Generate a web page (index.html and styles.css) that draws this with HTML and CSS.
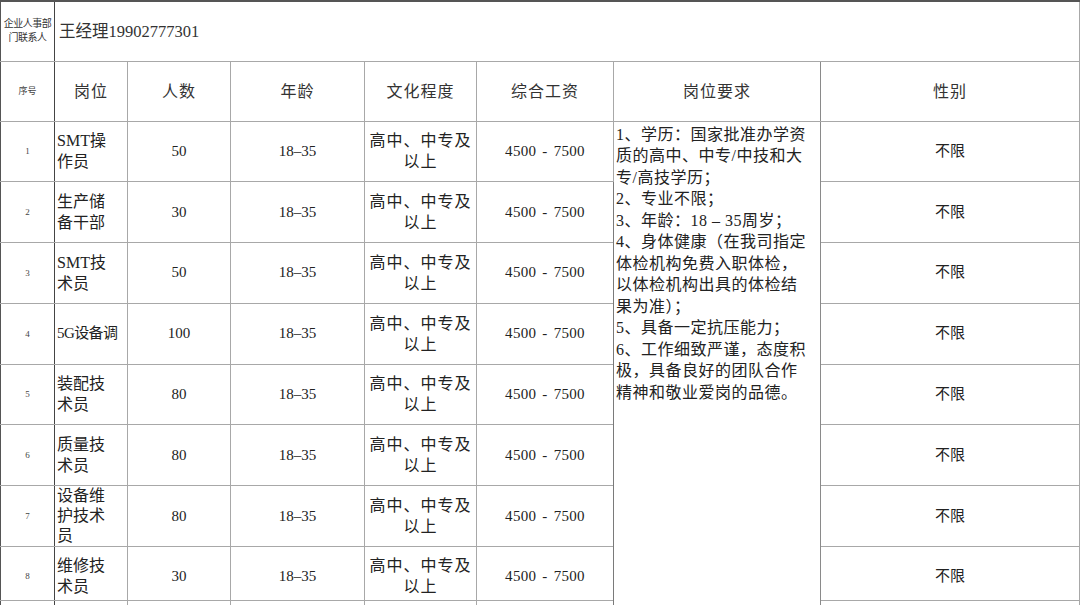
FILE: index.html
```html
<!DOCTYPE html>
<html lang="zh-CN">
<head>
<meta charset="utf-8">
<title>招聘岗位表</title>
<link rel="stylesheet" href="styles.css">
</head>
<body>
<table class="sheet">
  <colgroup>
    <col class="c-no"><col class="c-pos"><col class="c-num"><col class="c-age"><col class="c-edu"><col class="c-pay"><col class="c-req"><col class="c-sex">
  </colgroup>
  <tbody>
    <tr class="r-contact">
      <td class="tiny2 bold-right">企业人事部<br>门联系人</td>
      <td class="contact" colspan="7">王经理19902777301</td>
    </tr>
    <tr class="r-head">
      <td class="tiny bold-right">序号</td>
      <td class="head">岗位</td>
      <td class="head">人数</td>
      <td class="head">年龄</td>
      <td class="head">文化程度</td>
      <td class="head">综合工资</td>
      <td class="head req-border">岗位要求</td>
      <td class="head">性别</td>
    </tr>
    <tr class="r-data">
      <td class="tiny bold-right">1</td>
      <td class="pos">SMT操<br>作员</td>
      <td class="num">50</td>
      <td class="num">18–35</td>
      <td class="edu">高中、中专及<br>以上</td>
      <td class="num pay">4500 - 7500</td>
      <td class="req req-border" rowspan="9">1、学历：国家批准办学资<br>质的高中、中专/中技和大<br>专/高技学历；<br>2、专业不限；<br>3、年龄：18 – 35周岁；<br>4、身体健康（在我司指定<br>体检机构免费入职体检，<br>以体检机构出具的体检结<br>果为准）；<br>5、具备一定抗压能力；<br>6、工作细致严谨，态度积<br>极，具备良好的团队合作<br>精神和敬业爱岗的品德。</td>
      <td class="sex">不限</td>
    </tr>
    <tr class="r-data">
      <td class="tiny bold-right">2</td>
      <td class="pos">生产储<br>备干部</td>
      <td class="num">30</td>
      <td class="num">18–35</td>
      <td class="edu">高中、中专及<br>以上</td>
      <td class="num pay">4500 - 7500</td>
      <td class="sex">不限</td>
    </tr>
    <tr class="r-data">
      <td class="tiny bold-right">3</td>
      <td class="pos">SMT技<br>术员</td>
      <td class="num">50</td>
      <td class="num">18–35</td>
      <td class="edu">高中、中专及<br>以上</td>
      <td class="num pay">4500 - 7500</td>
      <td class="sex">不限</td>
    </tr>
    <tr class="r-data">
      <td class="tiny bold-right">4</td>
      <td class="pos tight">5G设备调</td>
      <td class="num">100</td>
      <td class="num">18–35</td>
      <td class="edu">高中、中专及<br>以上</td>
      <td class="num pay">4500 - 7500</td>
      <td class="sex">不限</td>
    </tr>
    <tr class="r-data">
      <td class="tiny bold-right">5</td>
      <td class="pos">装配技<br>术员</td>
      <td class="num">80</td>
      <td class="num">18–35</td>
      <td class="edu">高中、中专及<br>以上</td>
      <td class="num pay">4500 - 7500</td>
      <td class="sex">不限</td>
    </tr>
    <tr class="r-data">
      <td class="tiny bold-right">6</td>
      <td class="pos">质量技<br>术员</td>
      <td class="num">80</td>
      <td class="num">18–35</td>
      <td class="edu">高中、中专及<br>以上</td>
      <td class="num pay">4500 - 7500</td>
      <td class="sex">不限</td>
    </tr>
    <tr class="r-data">
      <td class="tiny bold-right">7</td>
      <td class="pos"><div class="clip3">设备维<br>护技术<br>员</div></td>
      <td class="num">80</td>
      <td class="num">18–35</td>
      <td class="edu">高中、中专及<br>以上</td>
      <td class="num pay">4500 - 7500</td>
      <td class="sex">不限</td>
    </tr>
    <tr class="r-last">
      <td class="tiny bold-right">8</td>
      <td class="pos">维修技<br>术员</td>
      <td class="num">30</td>
      <td class="num">18–35</td>
      <td class="edu">高中、中专及<br>以上</td>
      <td class="num pay">4500 - 7500</td>
      <td class="sex">不限</td>
    </tr>
    <tr class="r-more">
      <td class="bold-right"></td>
      <td></td>
      <td></td>
      <td></td>
      <td></td>
      <td></td>
      <td></td>
    </tr>
  </tbody>
</table>
</body>
</html>
```

FILE: styles.css
```css
html, body {
  margin: 0;
  padding: 0;
  background: #ffffff;
  overflow: hidden;
}

body {
  width: 1080px;
  height: 605px;
  font-family: "Liberation Serif", "Noto Sans CJK SC", serif;
  color: #222;
}

.sheet {
  border-collapse: collapse;
  table-layout: fixed;
  width: 1079px;
  border-top: 2px solid #555;
  border-left: 1px solid #555;
}

.c-no { width: 54px; }
.c-pos { width: 73px; }
.c-num { width: 103px; }
.c-age { width: 134px; }
.c-edu { width: 112px; }
.c-pay { width: 137px; }
.c-req { width: 207px; }
.c-sex { width: 259px; }

.sheet td {
  border: 1px solid #a8a8a8;
  padding: 0 2px;
  text-align: center;
  vertical-align: middle;
  font-size: 15px;
  line-height: 21px;
  overflow: hidden;
}

.sheet td.bold-right {
  border-right: 1px solid #444;
  border-left: 1px solid #555;
}

.sheet td.req-border {
  border-left: 1px solid #7a7a7a;
  border-right: 1px solid #8a8a8a;
}

.r-contact { height: 60px; }
.r-head { height: 60px; }
.r-data { height: 60.75px; }
.r-last { height: 54px; }
.r-more { height: 20px; }

.r-last td {
  padding-top: 5px;
}

.sheet td.tiny {
  font-size: 9px;
  line-height: 12px;
  color: #444;
}

.sheet td.tiny2 {
  font-size: 10px;
  line-height: 14px;
  color: #333;
  padding: 0;
  letter-spacing: -0.5px;
}

.sheet td.contact {
  text-align: left;
  font-size: 16.5px;
  color: #333;
  padding-left: 4px;
}

.sheet td.head {
  font-size: 16px;
  color: #333;
  letter-spacing: 1px;
}

.sheet td.pos {
  text-align: left;
  font-size: 16px;
  padding-left: 2px;
  line-height: 21px;
}

.sheet td.pos.tight {
  font-size: 15px;
  letter-spacing: -0.6px;
  white-space: nowrap;
}

.clip3 {
  height: 60px;
  overflow: hidden;
  line-height: 20px;
}

.sheet td.num {
  font-size: 15px;
}

.sheet td.pay {
  word-spacing: 2px;
  letter-spacing: 0.3px;
}

.sheet td.edu {
  font-size: 16px;
  letter-spacing: 1px;
}

.sheet td.sex {
  font-size: 15px;
}

.sheet td.req {
  text-align: left;
  vertical-align: top;
  font-size: 16px;
  line-height: 21.5px;
  letter-spacing: 0.5px;
  padding: 2px 0 0 2px;
  white-space: nowrap;
}
```
